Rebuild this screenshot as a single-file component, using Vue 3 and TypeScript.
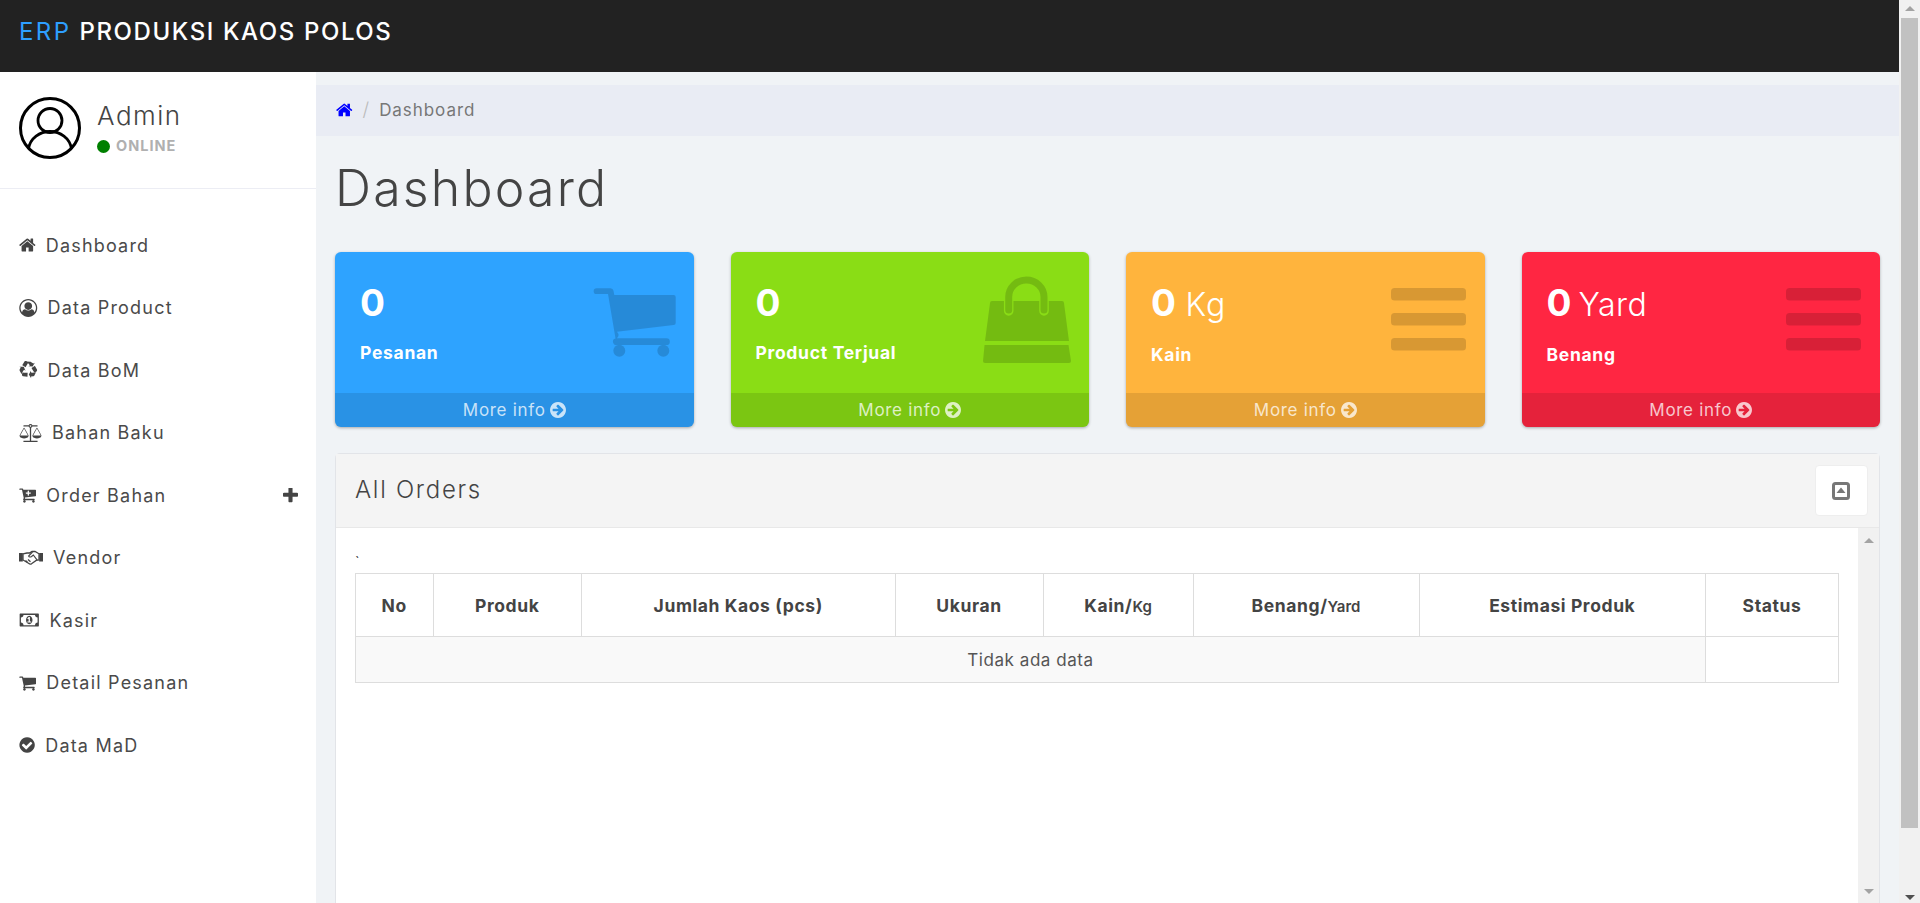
<script setup lang="ts">
interface NavItem { label: string; vb: string; w: number; d: string; plus?: boolean; custom?: boolean }

const cartD = 'M704 1536q0 52-38 90t-90 38-90-38-38-90 38-90 90-38 90 38 38 90zm896 0q0 52-38 90t-90 38-90-38-38-90 38-90 90-38 90 38 38 90zm128-1088v512q0 24-16.500 42.500t-40.500 21.500l-1044 122q13 60 13 70 0 16-24 64h920q26 0 45 19t19 45-19 45-45 19h-1024q-26 0-45-19t-19-45q0-11 8-31.500t16-36 21.500-40 15.500-29.500l-177-823h-204q-26 0-45-19t-19-45 19-45 45-19h256q16 0 28.500 6.500t19.500 15.500 13 24.500 8 26 5.500 29.500 4.500 26h1201q26 0 45 19t19 45z'
const homeD = 'M1472 992v480q0 26-19 45t-45 19h-384v-384h-256v384h-384q-26 0-45-19t-19-45v-480q0-1 .5-3t.5-3l575-474 575 474q1 2 1 6zm223-69l-62 74q-8 9-21 11h-3q-13 0-21-7l-692-577-692 577q-12 8-24 7-13-2-21-11l-62-74q-8-10-7-23.500t11-21.500l719-599q32-26 76-26t76 26l244 204v-195q0-14 9-23t23-9h192q14 0 23 9t9 23v408l219 182q10 8 11 21.500t-7 23.500z'
const arrowD = 'M1413 896q0-27-18-45l-91-91-362-362q-18-18-45-18t-45 18l-91 91q-18 18-18 45t18 45l189 189h-502q-26 0-45 19t-19 45v128q0 26 19 45t45 19h502l-189 189q-19 19-19 45t19 45l91 91q18 18 45 18t45-18l362-362 91-91q18-18 18-45zm251 0q0 209-103 385.500t-279.500 279.500-385.500 103-385.500-103-279.500-279.500-103-385.500 103-385.500 279.500-279.500 385.500-103 385.500 103 279.500 279.500 103 385.500z'
const plusD = 'M1600 736v192q0 40-28 68t-68 28h-416v416q0 40-28 68t-68 28h-192q-40 0-68-28t-28-68v-416h-416q-40 0-68-28t-28-68v-192q0-40 28-68t68-28h416v-416q0-40 28-68t68-28h192q40 0 68 28t28 68v416h416q40 0 68 28t28 68z'

const nav: NavItem[] = [
  { label: 'Dashboard', vb: '64 0 1664 1792', w: 16.7, d: homeD },
  { label: 'Data Product', vb: '0 0 1792 1792', w: 18.5, d: 'M896 0q182 0 348 71t286 191 191 286 71 348q0 181-70.500 347t-190.500 286-286 191.500-349 71.500-349-71-285.500-191.500-190.500-286-71-347.500 71-348 191-286 286-191 348-71zm619 1351q149-205 149-455 0-156-61-298t-164-245-245-164-298-61-298 61-245 164-164 245-61 298q0 250 149 455 66-327 306-327 131 128 313 128t313-128q240 0 306 327zm-235-647q0-159-112.500-271.500t-271.500-112.500-271.500 112.500-112.500 271.500 112.500 271.500 271.500 112.500 271.500-112.500 112.500-271.500z' },
  { label: 'Data BoM', vb: '0 0 1792 1792', w: 18.5, d: 'M836 1169l-15 368-2 22-420-29q-36-3-67-31.500t-47-65.500q-11-27-14.500-55t4-65 12-55 21.500-64 19-53q78 12 509 28zm-387-586l180 379-147-92q-63 72-111.500 144.500t-72.500 125-39.500 94.500-18.500 63l-4 21-190-357q-17-26-18-56t6-47l8-18q35-63 114-188l-140-86zm1231 517l-188 359q-12 29-36.500 46.500t-43.500 20.500l-18 4q-71 7-219 12l8 164-230-367 211-362 7 173q170 16 283 5t170-33zm-785-924q-47 63-265 435l-317-187-19-12 225-356q20-31 60-45t80-10q24 2 48.500 12t42 21 41.500 33 36 34.500 36 39.500 32 35zm655 307l212 363q18 37 12.500 76t-27.500 74q-13 20-33 37t-38 28-48.500 22-47 16-51.500 14-46 12q-34-72-265-436l313-195zm-143-226l142-83-220 373-419-20 151-86q-50-70-104-135t-99-112-84-82.500-56-51.500l-21-15 407 29q6-1 15 0t17.500 4 16.500 7 13.500 9 12 10 9.500 9 7 9 4 7z' },
  { label: 'Bahan Baku', vb: '0 0 2176 1792', w: 23, d: 'M1728 448l-384 704h768zm-1280 0l-384 704h768zm821-192q-14 40-45.500 71.500t-71.500 45.500v1291h608q14 0 23 9t9 23v64q0 14-9 23t-23 9h-1344q-14 0-23-9t-9-23v-64q0-14 9-23t23-9h608v-1291q-40-14-71.500-45.500t-45.500-71.500h-491q-14 0-23-9t-9-23v-64q0-14 9-23t23-9h491q21-57 70-92.500t111-35.500 111 35.500 70 92.500h491q14 0 23 9t9 23v64q0 14-9 23t-23 9h-491zm-181 16q33 0 56.500-23.500t23.500-56.500-23.500-56.500-56.500-23.500-56.500 23.500-23.500 56.500 23.500 56.500 56.500 23.500zm1088 880q0 73-46.500 131t-117.500 91-144.500 49.500-139.500 16.500-139.500-16.500-144.500-49.500-117.500-91-46.500-131q0-11 35-81t92-174.500 107-195.500 102-184 56-100q18-33 56-33t56 33q4 7 56 100t102 184 107 195.500 92 174.500 35 81zm-1280 0q0 73-46.500 131t-117.500 91-144.500 49.500-139.500 16.500-139.500-16.500-144.500-49.500-117.500-91-46.500-131q0-11 35-81t92-174.500 107-195.500 102-184 56-100q18-33 56-33t56 33q4 7 56 100t102 184 107 195.500 92 174.500 35 81z' },
  { label: 'Order Bahan', vb: '64 0 1664 1792', w: 17.3, plus: true, d: 'M1216 704q0-26-19-45t-45-19h-128v-128q0-26-19-45t-45-19-45 19-19 45v128h-128q-26 0-45 19t-19 45 19 45 45 19h128v128q0 26 19 45t45 19 45-19 19-45v-128h128q26 0 45-19t19-45zm-512 832q0 52-38 90t-90 38-90-38-38-90 38-90 90-38 90 38 38 90zm896 0q0 52-38 90t-90 38-90-38-38-90 38-90 90-38 90 38 38 90zm128-1088v512q0 24-16 42.500t-41 21.500l-1044 122q1 7 4.500 21.500t6 26.500 2.500 22q0 16-24 64h920q26 0 45 19t19 45-19 45-45 19h-1024q-26 0-45-19t-19-45q0-14 11-39.500t29.500-59.500 20.500-38l-177-823h-204q-26 0-45-19t-19-45 19-45 45-19h256q16 0 28.500 6.500t20 15.500 13 24.500 7.500 26.500 5.500 29.500 4.500 25.500h1201q26 0 45 19t19 45z' },
  { label: 'Vendor', vb: '', w: 24, d: '', custom: true },
  { label: 'Kasir', vb: '0 0 2048 1792', w: 20.5, d: 'M832 1152h384v-96h-128v-448h-114l-148 137 77 80q42-37 55-57h2v288h-128v96zm512-256q0 70-21 142t-59.500 134-101.500 101-138 39-138-39-101.500-101-59.500-134-21-142 21-142 59.500-134 101.500-101 138-39 138 39 101.500 101 59.500 134 21 142zm512 256v-512q-106 0-181-75t-75-181h-1152q0 106-75 181t-181 75v512q106 0 181 75t75 181h1152q0-106 75-181t181-75zm128-832v1152q0 26-19 45t-45 19h-1792q-26 0-45-19t-19-45v-1152q0-26 19-45t45-19h1792q26 0 45 19t19 45z' },
  { label: 'Detail Pesanan', vb: '64 0 1664 1792', w: 17.3, d: cartD },
  { label: 'Data MaD', vb: '128 0 1536 1792', w: 16.2, d: 'M1412 734q0-28-18-46l-91-90q-19-19-45-19t-45 19l-408 407-226-226q-19-19-45-19t-45 19l-91 90q-18 18-18 46 0 27 18 45l362 362q19 19 45 19 27 0 46-19l543-543q18-18 18-45zm252 162q0 209-103 385.500t-279.500 279.500-385.500 103-385.500-103-279.500-279.500-103-385.500 103-385.500 279.500-279.500 385.500-103 385.500 103 279.500 279.500 103 385.500z' },
]

interface Card { value: string; unit: string; label: string; tone: string; icon: string }
const cards: Card[] = [
  { value: '0', unit: '', label: 'Pesanan', tone: 'blue', icon: 'cart' },
  { value: '0', unit: '', label: 'Product Terjual', tone: 'green', icon: 'bag' },
  { value: '0', unit: 'Kg', label: 'Kain', tone: 'orange', icon: 'bars' },
  { value: '0', unit: 'Yard', label: 'Benang', tone: 'red', icon: 'bars' },
]

const columns = [
  { label: 'No', small: '', w: 77.5 },
  { label: 'Produk', small: '', w: 148.5 },
  { label: 'Jumlah Kaos (pcs)', small: '', w: 313.5 },
  { label: 'Ukuran', small: '', w: 148 },
  { label: 'Kain/', small: 'Kg', w: 150 },
  { label: 'Benang/', small: 'Yard', w: 226 },
  { label: 'Estimasi Produk', small: '', w: 286.5 },
  { label: 'Status', small: '', w: 133 },
]
</script>

<template>
  <div class="page">
    <div class="content">
      <header class="topbar">
        <span class="brand"><span class="erp">ERP</span> PRODUKSI KAOS POLOS</span>
      </header>
      <div class="layout">
        <aside class="sidebar">
          <div class="user">
            <svg class="avatar" viewBox="0 0 62 62" width="62" height="62" fill="none" stroke="#000">
              <circle cx="31" cy="31" r="29.500" stroke-width="3" />
              <circle cx="31" cy="23.500" r="12" stroke-width="2.800" />
              <path d="M9.500 52 C11 41 21 34.500 31 34.500 S51 41 52.500 52" stroke-width="2.800" />
            </svg>
            <div class="user-info">
              <div class="user-name">Admin</div>
              <div class="user-status"><span class="dot"></span>ONLINE</div>
            </div>
          </div>
          <nav class="nav">
            <a v-for="item in nav" :key="item.label" class="nav-item">
              <svg v-if="item.custom" class="nav-icon" viewBox="0 0 24 15" width="24" height="15">
                <path d="M0 3h3.800v8.500H0zM20.200 3H24v8.500h-3.800z" fill="#444" />
                <path d="M4 3.800 8 3h2.500L13 1.500h3L20 3.800V10l-2.800.4-4.700 3.400q-1.500.7-3-.6L4 10z" fill="none" stroke="#444" stroke-width="1.300" />
                <path d="M13.500 2 9.600 6q1 1.800 3 .4L14.300 5l3.900 5.200M6.500 10.500l2 1.800M9 9.500l2.500 2.300" fill="none" stroke="#444" stroke-width="1.200" />
              </svg>
              <svg v-else class="nav-icon" :viewBox="item.vb" :width="item.w" height="18" fill="#444" preserveAspectRatio="xMidYMid meet"><path :d="item.d" /></svg>
              <span class="nav-label">{{ item.label }}</span>
              <svg v-if="item.plus" class="nav-plus" viewBox="192 192 1408 1408" width="15" height="15" fill="#444"><path :d="plusD" /></svg>
            </a>
          </nav>
        </aside>
        <main class="main">
          <div class="breadcrumb">
            <svg viewBox="64 0 1664 1792" width="16.500" height="18" fill="#00f"><path :d="homeD" /></svg>
            <span class="crumb-sep">/</span>
            <span class="crumb-text">Dashboard</span>
          </div>
          <div class="wrap">
            <h1 class="title">Dashboard</h1>
            <section class="cards">
              <article v-for="card in cards" :key="card.label" class="card" :class="card.tone">
                <div class="card-main">
                  <div class="card-text">
                    <div class="card-value">{{ card.value }}<span v-if="card.unit" class="card-unit">{{ card.unit }}</span></div>
                    <div class="card-label">{{ card.label }}</div>
                  </div>
                  <svg class="card-icon" viewBox="0 0 90 90" width="90" height="90" fill="#000">
                    <path v-if="card.icon === 'cart'" d="M10.500 12.300h14a3 3 0 0 1 3 2.500L28.300 19H87.700a2 2 0 0 1 2 2V47a2 2 0 0 1-2 2L31 55.700l1.500 2.300q.7 2.500-1.500 4.300H80.500a3.350 3.350 0 0 1 0 6.700H31a3.300 3.300 0 0 1-1.500-6.500L22 18H10.500a2.850 2.850 0 0 1 0-5.700z" />
                    <g v-if="card.icon === 'cart'">
                      <circle cx="33.300" cy="74.700" r="6" /><circle cx="77.300" cy="74.700" r="6" />
                    </g>
                    <g v-if="card.icon === 'bag'">
                      <mask id="bag-cut" maskUnits="userSpaceOnUse" x="0" y="0" width="90" height="90">
                        <rect width="90" height="90" fill="#fff" />
                        <path d="M27.700 35V21a17.650 17 0 0 1 35.300 0V35" fill="none" stroke="#000" stroke-width="9.500" stroke-linecap="round" />
                      </mask>
                      <path mask="url(#bag-cut)" d="M11 25H81a2 2 0 0 1 2 2L88 65H4L9 27a2 2 0 0 1 2-2z" />
                      <path d="M27.700 34V21a17.650 17 0 0 1 35.300 0V34" fill="none" stroke="#000" stroke-width="7" stroke-linecap="round" />
                      <path d="M3.500 69H87.500L90 85a2 2 0 0 1-2 2H4a2 2 0 0 1-2-2z" />
                    </g>
                    <g v-if="card.icon === 'bars'">
                      <rect x="14" y="12" width="75" height="12.500" rx="3.500" />
                      <rect x="14" y="37" width="75" height="12.500" rx="3.500" />
                      <rect x="14" y="62" width="75" height="12.500" rx="3.500" />
                    </g>
                  </svg>
                </div>
                <a class="card-foot">More info
                  <svg viewBox="128 128 1536 1536" width="16" height="16" fill="currentColor"><path :d="arrowD" /></svg>
                </a>
              </article>
            </section>
            <section class="panel">
              <div class="panel-head">
                <h2 class="panel-title">All Orders</h2>
                <button class="panel-btn" type="button" aria-label="Collapse">
                  <svg viewBox="0 0 18 18" width="18" height="18">
                    <rect x="1.500" y="1.500" width="15" height="15" rx="2" fill="none" stroke="#777" stroke-width="3" />
                    <path d="M9 5.500 13.500 11h-9z" fill="#777" />
                  </svg>
                </button>
              </div>
              <div class="panel-body">
                <div class="panel-inner">
                  <div class="tick">`</div>
                  <table class="table">
                    <colgroup>
                      <col v-for="c in columns" :key="c.label" :style="{ width: c.w + 'px' }" />
                    </colgroup>
                    <thead>
                      <tr>
                        <th v-for="c in columns" :key="c.label">{{ c.label }}<small v-if="c.small">{{ c.small }}</small></th>
                      </tr>
                    </thead>
                    <tbody>
                      <tr>
                        <td colspan="7" class="empty">Tidak ada data</td>
                        <td class="blank"></td>
                      </tr>
                    </tbody>
                  </table>
                </div>
                <div class="inner-track">
                  <span class="tri up grey"></span>
                  <span class="tri down grey"></span>
                </div>
              </div>
            </section>
          </div>
        </main>
      </div>
    </div>
    <div class="page-track">
      <span class="tri up grey small-gap"></span>
      <div class="thumb"></div>
      <div class="track-rest"><span class="tri down dark"></span></div>
    </div>
  </div>
</template>

<style>
html, body { margin: 0; padding: 0; overflow: hidden; }
</style>

<style scoped>
.page {
  display: flex;
  height: 903px;
  overflow: hidden;
  font-family: Inter, "Noto Sans", sans-serif;
  color: #444;
  background: #f0f3f6;
}
.content { flex: 1; min-width: 0; display: flex; flex-direction: column; }
.topbar {
  height: 72px;
  flex: none;
  background: #222;
  padding: 19px 20px 0 19px;
  box-sizing: border-box;
}
.brand { font-size: 24px; line-height: 26px; color: #fff; font-weight: 500; letter-spacing: 1.600px; display: block; }
.erp { color: #2e9fff; font-weight: 400; letter-spacing: 2.400px; }
.layout { flex: 1; display: flex; min-height: 0; }
.sidebar { width: 316px; flex: none; background: #fff; }
.user {
  height: 117px;
  box-sizing: border-box;
  border-bottom: 1px solid #ecedf4;
  padding: 25px 0 0 19px;
  display: flex;
  gap: 16px;
}
.avatar { flex: none; }
.user-info { padding-top: 4px; }
.user-name { font-size: 26px; line-height: 30px; font-weight: 300; letter-spacing: 1.500px; color: #444; }
.user-status { display: flex; align-items: center; gap: 6px; font-size: 14.500px; font-weight: 700; color: #b0b0b0; line-height: 18px; margin-top: 6px; letter-spacing: 1px; }
.dot { width: 13px; height: 13px; border-radius: 50%; background: #008000; flex: none; }
.nav { padding-top: 25px; }
.nav-item {
  height: 62.500px;
  display: flex;
  align-items: center;
  gap: 10px;
  padding: 0 18px 0 19px;
  font-size: 18px;
  font-weight: 400;
  color: #4a4a4a;
  letter-spacing: 1.200px;
  box-sizing: border-box;
}
.nav-icon { flex: none; }
.nav-label { flex: 1; }
.nav-plus { flex: none; }
.main { flex: 1; min-width: 0; padding-top: 13px; display: flex; flex-direction: column; }
.breadcrumb {
  flex: none;
  height: 51px;
  box-sizing: border-box;
  padding: 0 0 2px 20px;
  background: #e9ecf4;
  display: flex;
  align-items: center;
  font-size: 17px;
  color: #777;
}
.crumb-sep { color: #bbb; margin: 0 10px 0 10px; font-weight: 300; font-size: 19px; }
.crumb-text { letter-spacing: .95px; font-weight: 400; }
.wrap { flex: 1; min-height: 0; padding: 0 19px; display: flex; flex-direction: column; }
.title { margin: 23px 0 35px; font-size: 50px; line-height: 58px; font-weight: 300; color: #444; letter-spacing: 2.200px; }
.cards { display: grid; grid-template-columns: repeat(4, 1fr); column-gap: 37px; flex: none; }
.card {
  height: 175px;
  border-radius: 6px;
  overflow: hidden;
  box-shadow: 0 1px 3px rgba(0, 0, 0, .3);
  display: flex;
  flex-direction: column;
  color: #fff;
}
.card-main { flex: 1; display: flex; justify-content: space-between; align-items: flex-start; padding: 24px 18px 0 25px; }
.card-text { padding-top: 7px; }
.card-value { font-size: 37px; line-height: 40px; font-weight: 700; }
.card-unit { font-size: 32px; font-weight: 300; margin-left: 7px; letter-spacing: 1px; }
.orange .card-unit { margin-left: 9.500px; }
.red .card-unit { letter-spacing: .5px; }
.card-label { margin-top: 19px; font-size: 17.500px; line-height: 22px; font-weight: 700; letter-spacing: .7px; }
.card-icon { flex: none; opacity: .15; }
.card-foot {
  flex: none;
  height: 34px;
  background: rgba(0, 0, 0, .1);
  display: flex;
  align-items: center;
  justify-content: center;
  gap: 4px;
  font-size: 17px;
  letter-spacing: .7px;
  color: rgba(255, 255, 255, .75);
}
.blue { background: #2ea3ff; }
.green { background: #8add15; }
.orange { background: #ffb43d; }
.red { background: #ff2642; }
.panel {
  flex: 1;
  min-height: 0;
  margin-top: 26px;
  background: #fff;
  border: 1px solid #e2e4e8;
  border-bottom: none;
  border-radius: 5px 5px 0 0;
  display: flex;
  flex-direction: column;
}
.panel-head {
  flex: none;
  height: 74px;
  box-sizing: border-box;
  background: #f4f4f4;
  border-bottom: 1px solid #e8e8e8;
  padding: 0 11px 0 19px;
  display: flex;
  align-items: center;
  justify-content: space-between;
}
.panel-title { margin: 0 0 2px; font-size: 24px; font-weight: 300; color: #444; letter-spacing: 1.700px; }
.panel-btn {
  width: 53px;
  height: 51px;
  background: #fff;
  border: 1px solid #eee;
  border-radius: 4px;
  padding: 0 2px 0 0;
  display: flex;
  align-items: center;
  justify-content: center;
}
.panel-body { flex: 1; min-height: 0; display: flex; }
.panel-inner { flex: 1; min-width: 0; padding: 27px 20px 0 19px; }
.tick { height: 18px; font-size: 14px; line-height: 14px; color: #444; }
.table { width: 1483px; border-collapse: collapse; table-layout: fixed; }
.table th, .table td { border: 1px solid #ddd; text-align: center; padding: 0; }
.table th { height: 62px; font-size: 17.500px; font-weight: 700; color: #444; letter-spacing: .6px; }
.table small { font-size: 15px; font-weight: 600; letter-spacing: 0; }
.table td { height: 45px; font-size: 17px; font-weight: 400; color: #555; letter-spacing: .55px; }
.empty { background: #f9f9f9; }
.blank { background: #fff; }
.inner-track {
  flex: none;
  width: 21px;
  background: #f1f1f1;
  display: flex;
  flex-direction: column;
  align-items: center;
  justify-content: space-between;
  padding: 10px 0 9px;
  box-sizing: border-box;
}
.tri { display: block; width: 0; height: 0; border-left: 5px solid transparent; border-right: 5px solid transparent; }
.tri.up.grey { border-bottom: 5px solid #a3a3a3; }
.tri.down.grey { border-top: 5px solid #a3a3a3; }
.tri.down.dark { border-top: 5px solid #505050; }
.page-track {
  flex: none;
  width: 21px;
  background: #f1f1f1;
  display: flex;
  flex-direction: column;
  align-items: center;
  padding-top: 6px;
  box-sizing: border-box;
}
.small-gap { margin-bottom: 7px; }
.thumb { width: 17px; height: 810px; background: #c1c1c1; flex: none; }
.track-rest { flex: 1; display: flex; flex-direction: column; justify-content: flex-end; padding-bottom: 3px; }
</style>
